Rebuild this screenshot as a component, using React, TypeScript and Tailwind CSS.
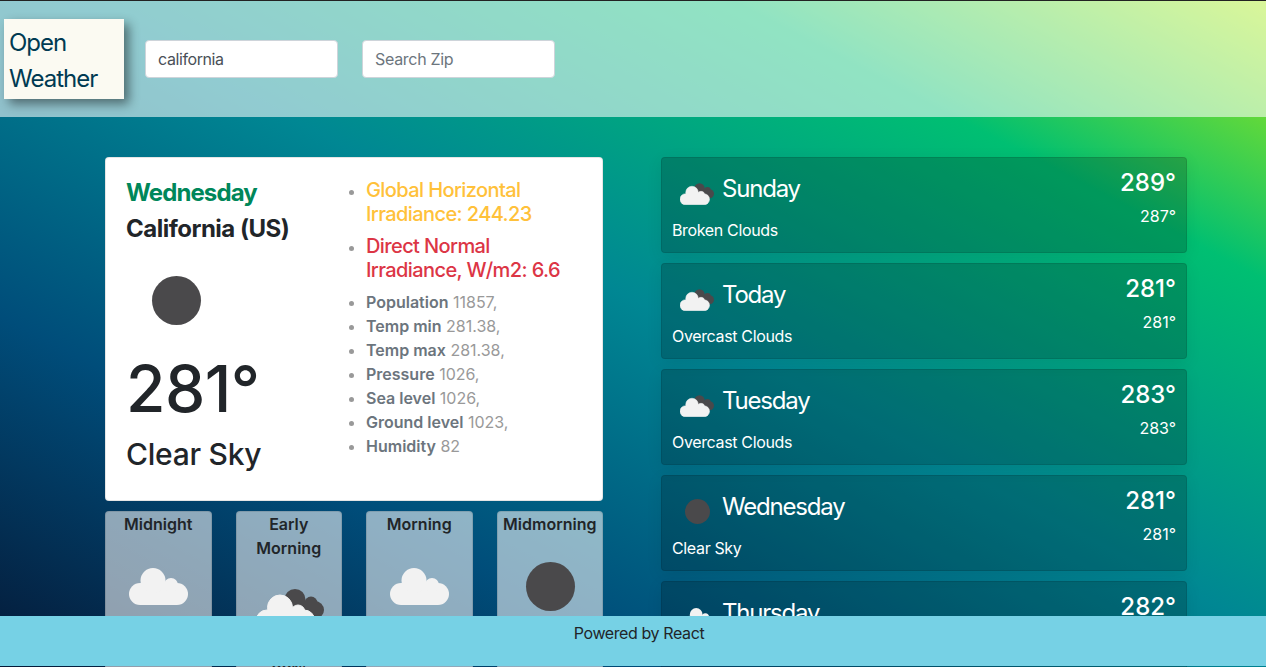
import React from 'react';

const Sun = ({ className }: { className: string }) => <div className={`rounded-full bg-[#4a494b] ${className}`} />;

const Cloud = ({ className }: { className: string }) => (
  <svg viewBox="0 0 59 37" className={className} fill="#f2f2f2">
    <rect x="0" y="15" width="59" height="22" rx="11" />
    <circle cx="24" cy="12.5" r="12.5" />
    <circle cx="42" cy="17" r="7" />
  </svg>
);

const BrokenCloud = ({ className }: { className: string }) => (
  <svg viewBox="0 0 68 43" className={className}>
    <g fill="#4a494b">
      <circle cx="39" cy="10.5" r="10.5" />
      <circle cx="55" cy="14" r="6.5" />
      <rect x="25" y="12" width="43" height="18" rx="9" />
    </g>
    <g fill="#f2f2f2" stroke="#f2f2f2" strokeWidth="1">
      <rect x="0" y="21" width="59" height="22" rx="11" />
      <circle cx="24" cy="18.5" r="12.5" />
      <circle cx="42" cy="23" r="7" />
    </g>
  </svg>
);

const hours = [
  { title: 'Midnight', icon: <Cloud className="w-[59px] h-[37px]" /> },
  { title: 'Early Morning', icon: <BrokenCloud className="w-[68px] h-[43px] translate-x-[1px]" /> },
  { title: 'Morning', icon: <Cloud className="w-[59px] h-[37px]" /> },
  { title: 'Midmorning', icon: <Sun className="w-[49px] h-[49px] translate-x-[1px]" /> },
];

const smallBroken = <BrokenCloud className="w-[34px] h-[22px] ml-[8px] mt-[12px]" />;

const days = [
  { day: 'Sunday', desc: 'Broken Clouds', hi: '289°', lo: '287°', icon: smallBroken },
  { day: 'Today', desc: 'Overcast Clouds', hi: '281°', lo: '281°', icon: smallBroken },
  { day: 'Tuesday', desc: 'Overcast Clouds', hi: '283°', lo: '283°', icon: smallBroken },
  { day: 'Wednesday', desc: 'Clear Sky', hi: '281°', lo: '281°', icon: <Sun className="w-[25px] h-[25px] ml-[13px] mr-[4px] mt-[10px]" /> },
  { day: 'Thursday', desc: 'Overcast Clouds', hi: '282°', lo: '282°', icon: <Cloud className="w-[30px] h-[19px] ml-[12px] mt-[13px]" /> },
];

const stats = [
  ['Population', '11857,'],
  ['Temp min', '281.38,'],
  ['Temp max', '281.38,'],
  ['Pressure', '1026,'],
  ['Sea level', '1026,'],
  ['Ground level', '1023,'],
  ['Humidity', '82'],
];

export default function App() {
  return (
    <div className="relative h-screen overflow-hidden border-t border-[#222222] bg-[linear-gradient(to_right_top,#051937,#004d7a,#008793,#00bf72_79%,#a8eb12)] font-['Inter',sans-serif] text-[16px] text-[#212529]">
      {/* Header */}
      <div className="flex h-[116px] items-center bg-white/[0.57] pl-[4px]">
        <div className="h-[80px] w-[120px] bg-[#fbfaf2] pl-[5px] pt-[6px] text-[24px] leading-[36px] tracking-[-1px] text-[#003a52] shadow-[5px_5px_10px_rgba(0,0,0,0.45)]">
          Open Weather
        </div>
        <input
          readOnly
          defaultValue="california"
          className="ml-[21px] h-[38px] w-[193px] rounded border border-[#ced4da] bg-white px-[12px] tracking-[-0.4px] text-[#495057] outline-none"
        />
        <input
          readOnly
          placeholder="Search Zip"
          className="ml-[24px] h-[38px] w-[193px] rounded border border-[#ced4da] bg-white px-[12px] tracking-[-0.3px] text-[#495057] outline-none placeholder:text-[#6c757d]"
        />
      </div>

      {/* Main */}
      <div className="flex gap-[58px] pl-[105px] pt-[40px]">
        <div className="w-[498px]">
          <div className="flex h-[344px] rounded border border-black/10 bg-white pl-[20px] pt-[17px]">
            <div className="w-[200px] shrink-0">
              <div className="text-[24px] font-bold leading-[36px] tracking-[-0.9px] text-[#00875a]">Wednesday</div>
              <div className="text-[24px] font-bold leading-[36px] tracking-[-0.5px]">California (US)</div>
              <Sun className="ml-[26px] mt-[29px] h-[49px] w-[49px]" />
              <div className="mt-[25px] text-[64px] font-medium leading-[77px] tracking-[-0.5px]">281°</div>
              <div className="mt-[8px] text-[30px] font-medium leading-[38px] tracking-[-0.25px]">Clear Sky</div>
            </div>
            <ul className="w-[255px] list-disc pl-[40px] pt-[4px] leading-[24px] text-[#999999]">
              <li className="mb-[8px]">
                <span className="text-[20px] font-medium leading-none tracking-[-0.6px] text-[#ffc13a]">Global Horizontal Irradiance: 244.23</span>
              </li>
              <li className="mb-[7px]">
                <span className="text-[20px] font-medium leading-none tracking-[-0.6px] text-[#dc3545]">Direct Normal Irradiance, W/m2: 6.6</span>
              </li>
              {stats.map(([label, value]) => (
                <li key={label}>
                  <b className="font-semibold text-[#6c757d]">{label}</b> {value}
                </li>
              ))}
            </ul>
          </div>

          <div className="mt-[10px] grid grid-cols-4 gap-[24px]">
            {hours.map((h) => (
              <div key={h.title} className="rounded border border-black/10 bg-white/[0.56] pb-[16px] text-center leading-[24px]">
                <div className="font-semibold">{h.title}</div>
                <div className="mt-[26px] flex h-[49px] items-center justify-center">{h.icon}</div>
                <div className="mt-[23px] font-semibold">281°</div>
              </div>
            ))}
          </div>
        </div>

        <div className="flex w-[526px] flex-col gap-[10px]">
          {days.map((d) => (
            <div
              key={d.day + d.hi}
              className="flex h-[96px] shrink-0 justify-between rounded border border-black/10 bg-black/20 pl-[10px] pr-[10px] text-white shadow-[0_4px_16px_rgba(0,0,0,0.08)]"
            >
              <div>
                <div className="flex h-[50px] items-start gap-[8px] pt-[13px]">
                  {d.icon}
                  <span className="text-[24px] leading-[36px] tracking-[-1.2px]">{d.day}</span>
                </div>
                <div className="mt-[10px] leading-[24px] tracking-[-0.35px]">{d.desc}</div>
              </div>
              <div className="pt-[7px] text-right">
                <div className="text-[24px] font-medium leading-[36px]">{d.hi}</div>
                <div className="mt-[3px] leading-[24px]">{d.lo}</div>
              </div>
            </div>
          ))}
        </div>
      </div>

      {/* Footer */}
      <div className="absolute inset-x-0 bottom-[1px] h-[50px] bg-[#76d1e5] pt-[5px] text-center leading-[24px] tracking-[-0.4px]">
        <span className="ml-[12px]">Powered by React</span>
      </div>
    </div>
  );
}
